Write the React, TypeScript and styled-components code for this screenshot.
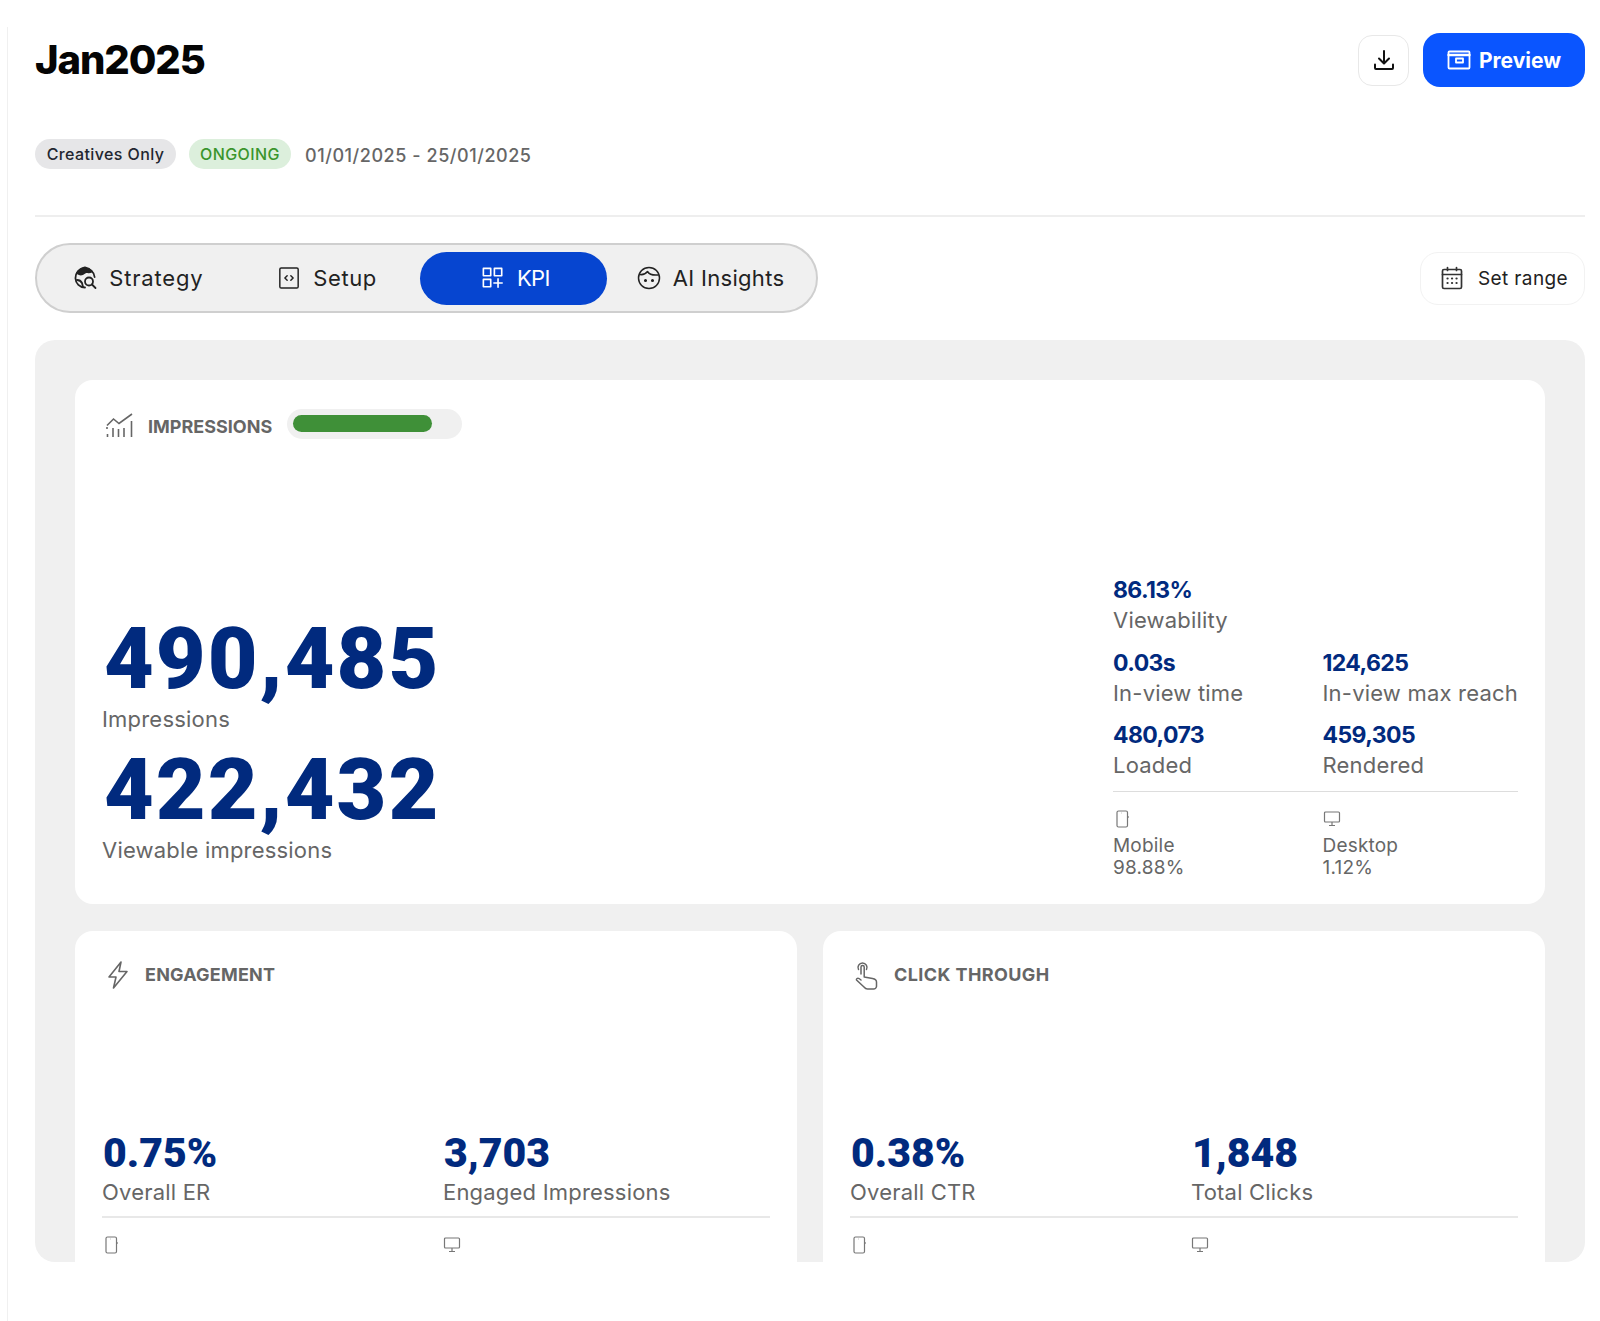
import React from "react";
import styled, { createGlobalStyle } from "styled-components";

const Global = createGlobalStyle`
  html, body { margin: 0; padding: 0; background: #fff; }
  body { font-family: "Inter", "Liberation Sans", sans-serif; }
  * { box-sizing: border-box; }
`;

const Page = styled.div`
  margin-top: 27px;
  margin-left: 7px;
  height: 1294px;
  border-left: 1px solid #f0f0f0;
  padding: 6px 15px 0 27px;
  overflow: hidden;
`;
const Header = styled.header`
  display: flex;
  justify-content: space-between;
  align-items: center;
  height: 54px;
`;
const Title = styled.h1`
  margin: 0;
  font: 800 40px/58px "Inter", sans-serif;
  letter-spacing: -1.1px;
  color: #050505;
`;
const Actions = styled.div`
  display: flex;
  align-items: center;
  gap: 14px;
`;
const IconButton = styled.button`
  width: 51px;
  height: 51px;
  display: flex;
  align-items: center;
  justify-content: center;
  padding: 0;
  background: #fff;
  border: 1px solid #e8e8e8;
  border-radius: 14px;
  color: #111;
`;
const PreviewButton = styled.button`
  width: 162px;
  height: 54px;
  display: flex;
  align-items: center;
  justify-content: center;
  gap: 8px;
  padding: 0;
  border: 0;
  border-radius: 17px;
  background: #0a55ff;
  color: #fff;
  font: 700 21px "Inter", sans-serif;
`;
const Meta = styled.div`
  display: flex;
  align-items: center;
  gap: 13px;
  margin-top: 52px;
  height: 30px;
`;
const Pill = styled.span<{ $bg: string; $fg: string; $w: number }>`
  display: inline-flex;
  align-items: center;
  justify-content: center;
  width: ${(p) => p.$w}px;
  height: 30px;
  border-radius: 15px;
  background: ${(p) => p.$bg};
  color: ${(p) => p.$fg};
  font: 500 16px "Inter", sans-serif;
  letter-spacing: 0.4px;
  white-space: nowrap;
`;
const DateRange = styled.span`
  padding: 2px 0 0 1px;
  font: 500 18px "Inter", sans-serif;
  color: #666;
  letter-spacing: 0.55px;
`;
const Divider = styled.hr`
  margin: 46px 0 0;
  border: 0;
  height: 2px;
  background: #eeeeee;
`;
const TabRow = styled.div`
  display: flex;
  justify-content: space-between;
  align-items: center;
  margin-top: 26px;
`;
const TabBar = styled.nav`
  width: 783px;
  height: 70px;
  display: flex;
  align-items: center;
  padding: 0 5px;
  background: #f0f0f0;
  border: 2px solid #cfcfcf;
  border-radius: 35px;
`;
const Tab = styled.div<{ $w: number; $ls: number; $gap: number; $pad: number; $active?: boolean }>`
  width: ${(p) => p.$w}px;
  height: 53px;
  display: flex;
  align-items: center;
  justify-content: center;
  gap: ${(p) => p.$gap}px;
  padding-left: ${(p) => p.$pad}px;
  border-radius: 27px;
  background: ${(p) => (p.$active ? "#0645d0" : "transparent")};
  color: ${(p) => (p.$active ? "#fff" : "#222")};
  font: 400 22px "Inter", sans-serif;
  letter-spacing: ${(p) => p.$ls}px;
  white-space: nowrap;
`;
const RangeButton = styled.button`
  width: 165px;
  height: 53px;
  display: flex;
  align-items: center;
  justify-content: center;
  gap: 15px;
  padding: 0 0 0 4px;
  background: #fff;
  border: 1px solid #f2f2f2;
  border-radius: 18px;
  color: #222;
  font: 400 19px "Inter", sans-serif;
  letter-spacing: 0.4px;
`;
const Panel = styled.main`
  margin-top: 27px;
  height: 922px;
  padding: 40px;
  overflow: hidden;
  background: #f0f0f0;
  border-radius: 20px;
`;
const Card = styled.section`
  background: #fff;
  border-radius: 18px;
`;
const HeroCard = styled(Card)`
  height: 524px;
  padding: 29px 27px 0 27px;
  display: flex;
  flex-direction: column;
`;
const CardHead = styled.div<{ $gap: number }>`
  display: flex;
  align-items: center;
  gap: ${(p) => p.$gap}px;
  color: #666;
`;
const HeroHead = styled(CardHead)`
  padding-left: 4px;
  svg { margin-bottom: 3px; }
`;
const CardTitle = styled.h2<{ $ls?: number }>`
  margin: 0;
  font: 700 18px/30px "Inter", sans-serif;
  letter-spacing: ${(p) => p.$ls ?? 0}px;
  color: #666;
`;
const Track = styled.div`
  width: 175px;
  height: 30px;
  margin-bottom: 6px;
  padding: 6px;
  background: #f0f0f0;
  border-radius: 15px;
`;
const Fill = styled.div`
  height: 17px;
  background: #3f9038;
  border-radius: 9px;
`;
const HeroBody = styled.div`
  display: flex;
  justify-content: space-between;
  align-items: flex-end;
  margin-top: auto;
  padding-bottom: 25px;
`;
const HeroStats = styled.div`
  display: flex;
  flex-direction: column;
  padding-bottom: 14px;
`;
const BigValue = styled.div`
  font: 900 86px/92px "Roboto", sans-serif;
  letter-spacing: 2px;
  color: #012a7e;
  padding-left: 2px;
`;
const Label = styled.div`
  font: 400 22px/30px "Inter", sans-serif;
  letter-spacing: 0.2px;
  color: #666;
  white-space: nowrap;
`;
const HeroLabel = styled(Label)`
  margin: -1px 0 10px;
  &:last-child { margin-bottom: 0; }
`;
const Side = styled.div`
  width: 405px;
`;
const SideGrid = styled.div`
  display: grid;
  grid-template-columns: 209.500px 195.500px;
  row-gap: 12.5px;
  padding-bottom: 11px;
  border-bottom: 1px solid #ddd;
`;
const SideValue = styled.div`
  font: 700 23px/30px "Inter", sans-serif;
  letter-spacing: -0.6px;
  color: #012a7e;
`;
const DeviceRow = styled.div`
  display: grid;
  grid-template-columns: 209.500px 195.500px;
  padding-top: 18px;
`;
const Device = styled.div`
  font: 400 19px/22px "Inter", sans-serif;
  letter-spacing: 0.2px;
  color: #666;
  svg { display: block; margin-bottom: 7px; }
`;
const Columns = styled.div`
  display: grid;
  grid-template-columns: 722px 722px;
  column-gap: 26px;
  margin-top: 27px;
`;
const MiniCard = styled(Card)`
  height: 400px;
  padding: 29px 27px 0;
`;
const MiniHead = styled(CardHead)`
  padding-left: 5px;
`;
const MiniStats = styled.div`
  display: grid;
  grid-template-columns: 341px 1fr;
  margin-top: 139px;
  padding-bottom: 9px;
  border-bottom: 2px solid #e8e8e8;
`;
const MidValue = styled.div`
  padding-left: 1px;
  font: 900 41px/48px "Roboto", sans-serif;
  color: #012a7e;
`;
const MiniDevices = styled.div`
  display: grid;
  grid-template-columns: 341px 1fr;
  padding-top: 18px;
`;

const Svg = ({ size = 24, children, w = 2 }: { size?: number; children: React.ReactNode; w?: number }) => (
  <svg width={size} height={size} viewBox="0 0 24 24" fill="none" stroke="currentColor" strokeWidth={w} strokeLinecap="round" strokeLinejoin="round">
    {children}
  </svg>
);
const DownloadIcon = () => (
  <Svg size={24}>
    <path d="M12 3v12M7 10.500l5 5 5-5M3 16.500V20a1 1 0 0 0 1 1h16a1 1 0 0 0 1-1v-3.500" />
  </Svg>
);
const WindowIcon = () => (
  <Svg size={24} w={1.8}>
    <rect x="1.500" y="3.500" width="21" height="17" rx="1" />
    <path d="M1.500 7h21" strokeWidth="2.400" />
    <rect x="9" y="10.500" width="7" height="4" />
  </Svg>
);
const GlobeSearchIcon = () => (
  <Svg size={24} w={1.8}>
    <path d="M11 21.500A9.600 9.600 0 1 1 20.600 11" />
    <path d="M3 7c2-3.500 5-5 8-5.500 3 .5 5 1.500 7 4-2 1-4 1-5.500.5-2 .5-3 2-5 2.500-1.500.5-3-.5-4.500-1.500z" fill="currentColor" />
    <path d="M3 14c2 0 4 1 5 3l1 4" />
    <circle cx="15" cy="15.500" r="4" />
    <path d="M18 18.500l3.500 3.500" />
  </Svg>
);
const CodeIcon = () => (
  <Svg size={22} w={1.6}>
    <rect x="2" y="1" width="20" height="22" rx="1.500" />
    <path d="M10 9.500L7.500 12l2.500 2.500M14 9.500l2.500 2.500-2.500 2.500" />
  </Svg>
);
const GridPlusIcon = () => (
  <Svg size={22} w={1.8}>
    <rect x="1.500" y="1.500" width="8" height="8" />
    <rect x="13.500" y="1.500" width="8" height="8" />
    <rect x="1.500" y="13.500" width="8" height="8" />
    <path d="M17.500 13v9M13 17.500h9" />
  </Svg>
);
const FaceIcon = () => (
  <Svg size={24} w={1.5}>
    <circle cx="12" cy="12" r="10.500" />
    <path d="M3 8.500c3 .5 5.500-.5 7.500-3 1.500 2.500 5 4 10.500 3.500" />
    <circle cx="8.500" cy="14.500" r=".8" fill="currentColor" />
    <circle cx="15.500" cy="14.500" r=".8" fill="currentColor" />
  </Svg>
);
const CalendarIcon = () => (
  <svg width="22" height="24" viewBox="0 0 22 24" fill="none" stroke="#333" strokeWidth="1.700" strokeLinecap="round">
    <rect x="1.500" y="3.500" width="19" height="19" rx="1.500" />
    <path d="M1.500 8.500h19M6.500 1.500v3M15.500 1.500v3" />
    <path d="M6.500 12.500h.1M11 12.500h.1M15.500 12.500h.1M6.500 17h.1M11 17h.1M15.500 17h.1" strokeWidth="2.200" />
  </svg>
);
const ChartIcon = () => (
  <svg width="27" height="25" viewBox="0 0 27 25" fill="none" stroke="#666" strokeWidth="1.600">
    <path d="M1 12.500L7.500 6l5.500 4.500L26 1" />
    <path d="M1.500 24v-3M7 24v-9M12.500 24v-8M18 24v-9M25.500 24V8M1 14v2" />
  </svg>
);
const BoltIcon = () => (
  <svg width="22" height="28" viewBox="0 0 22 28" fill="none" stroke="#666" strokeWidth="1.600" strokeLinejoin="round">
    <path d="M14 1L2 16h7l-2.500 11L20 10.500h-8z" />
  </svg>
);
const TouchIcon = () => (
  <svg width="23" height="29" viewBox="0 0 23 29" fill="none" stroke="#666" strokeWidth="1.500" strokeLinecap="round" strokeLinejoin="round">
    <path d="M3.500 8.500a4.500 4.500 0 1 1 8 0" />
    <path d="M6 13V6a1.600 1.600 0 0 1 3.200 0v10l8.300 1.500c2.500.5 4 1.500 4 3.500v4.500a3 3 0 0 1-3 2.500h-6c-1.500 0-2.500-.7-3.500-2L1.500 19c-.5-1 1-2.500 2.500-1.500L6 19" />
  </svg>
);
const MobileIcon = () => (
  <svg width="17" height="18" viewBox="0 0 17 18" fill="none" stroke="#777" strokeWidth="1.200">
    <rect x="4" y="1" width="10.500" height="16" rx="1.500" />
    <path d="M15 6v2M8.500 3h.4" />
  </svg>
);
const DesktopIcon = () => (
  <svg width="18" height="18" viewBox="0 0 18 18" fill="none" stroke="#777" strokeWidth="1.200">
    <rect x="1.500" y="2" width="15" height="10" rx="1" />
    <path d="M9 12v3M6 15.500h6" />
  </svg>
);

const Stat = ({ v, l }: { v: string; l: string }) => (
  <div>
    <SideValue>{v}</SideValue>
    <Label>{l}</Label>
  </div>
);

const Mini = ({ title, icon, gap, ls, a, b }: { title: string; icon: React.ReactNode; gap: number; ls: number; a: [string, string]; b: [string, string] }) => (
  <MiniCard>
    <MiniHead $gap={gap}>
      {icon}
      <CardTitle $ls={ls}>{title}</CardTitle>
    </MiniHead>
    <MiniStats>
      <div>
        <MidValue>{a[0]}</MidValue>
        <Label>{a[1]}</Label>
      </div>
      <div>
        <MidValue>{b[0]}</MidValue>
        <Label>{b[1]}</Label>
      </div>
    </MiniStats>
    <MiniDevices>
      <MobileIcon />
      <DesktopIcon />
    </MiniDevices>
  </MiniCard>
);

export default function App() {
  return (
    <>
      <Global />
      <Page>
        <Header>
          <Title>Jan2025</Title>
          <Actions>
            <IconButton aria-label="Download"><DownloadIcon /></IconButton>
            <PreviewButton><WindowIcon />Preview</PreviewButton>
          </Actions>
        </Header>
        <Meta>
          <Pill $bg="#e6e6e8" $fg="#222630" $w={141}>Creatives Only</Pill>
          <Pill $bg="#dcefdc" $fg="#3a952c" $w={102}>ONGOING</Pill>
          <DateRange>01/01/2025 - 25/01/2025</DateRange>
        </Meta>
        <Divider />
        <TabRow>
          <TabBar>
            <Tab $w={192} $ls={0.8} $gap={11} $pad={2}><GlobeSearchIcon />Strategy</Tab>
            <Tab $w={186} $ls={0.6} $gap={13} $pad={2}><CodeIcon />Setup</Tab>
            <Tab $w={188} $ls={-0.6} $gap={13} $pad={5} $active><GridPlusIcon />KPI</Tab>
            <Tab $w={204} $ls={0.3} $gap={12} $pad={3}><FaceIcon />AI Insights</Tab>
          </TabBar>
          <RangeButton><CalendarIcon />Set range</RangeButton>
        </TabRow>
        <Panel>
          <HeroCard>
            <HeroHead $gap={15}>
              <ChartIcon />
              <CardTitle>IMPRESSIONS</CardTitle>
              <Track><Fill style={{ width: `${(139 / 163) * 100}%` }} /></Track>
            </HeroHead>
            <HeroBody>
              <HeroStats>
                <BigValue>490,485</BigValue>
                <HeroLabel>Impressions</HeroLabel>
                <BigValue>422,432</BigValue>
                <HeroLabel>Viewable impressions</HeroLabel>
              </HeroStats>
              <Side>
                <SideGrid>
                  <Stat v="86.13%" l="Viewability" />
                  <div />
                  <Stat v="0.03s" l="In-view time" />
                  <Stat v="124,625" l="In-view max reach" />
                  <Stat v="480,073" l="Loaded" />
                  <Stat v="459,305" l="Rendered" />
                </SideGrid>
                <DeviceRow>
                  <Device><MobileIcon />Mobile<br />98.88%</Device>
                  <Device><DesktopIcon />Desktop<br />1.12%</Device>
                </DeviceRow>
              </Side>
            </HeroBody>
          </HeroCard>
          <Columns>
            <Mini title="ENGAGEMENT" icon={<BoltIcon />} gap={16} ls={0.2} a={["0.75%", "Overall ER"]} b={["3,703", "Engaged Impressions"]} />
            <Mini title="CLICK THROUGH" icon={<TouchIcon />} gap={16} ls={0.4} a={["0.38%", "Overall CTR"]} b={["1,848", "Total Clicks"]} />
          </Columns>
        </Panel>
      </Page>
    </>
  );
}
